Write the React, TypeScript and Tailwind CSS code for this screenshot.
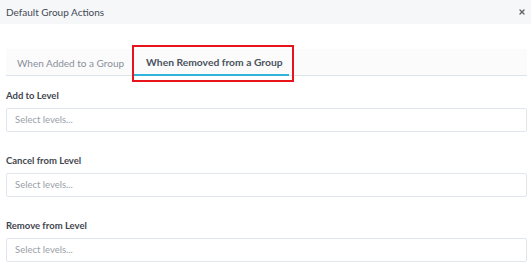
import { X } from "lucide-react";

const sections = ["Add to Level", "Cancel from Level", "Remove from Level"];

export default function App() {
  return (
    <div className="w-[531px] h-[268px] bg-white overflow-hidden font-['Lato',sans-serif] text-[#3f4650]">
      {/* header */}
      <div className="h-[24px] bg-[#f6f7f9] flex items-center justify-between pl-[6px] pr-[5px]">
        <span className="text-[10px] leading-none text-[#434a54]">Default Group Actions</span>
        <X size={8} strokeWidth={4} className="text-[#666]" />
      </div>

      <div className="pl-[6px] pr-[4px]">
        {/* tabs */}
        <div className="mt-[25px] flex h-[27px] bg-[#fbfbfc] border-b border-[#dde3ea]">
          <button className="pl-[11px] pr-[10px] text-[10px] text-[#8a9099] leading-none pt-[2px] whitespace-nowrap">
            When Added to a Group
          </button>
          <button className="relative w-[155px] pl-[12px] text-left text-[10.3px] font-bold text-[#4a525d] leading-none pt-[2px] whitespace-nowrap border-b-2 border-[#2fb5dc] -mb-[1px]">
            When Removed from a Group
            <span className="absolute -left-[2px] -right-[5px] -top-[4px] -bottom-[8px] border-2 border-[#e8141c] pointer-events-none" />
          </button>
        </div>

        {/* fields */}
        <div className="mt-[14px] flex flex-col gap-[23px]">
          {sections.map((label) => (
            <div key={label}>
              <div className="h-[12px] text-[9.5px] font-bold leading-[12px] text-[#3f4650]">{label}</div>
              <div className="mt-[6px] h-[24px] border border-[#e1e6ec] rounded-[2px] flex items-center pl-[8px] text-[9.5px] text-[#9aa0a6]">
                Select levels...
              </div>
            </div>
          ))}
        </div>
      </div>
    </div>
  );
}
